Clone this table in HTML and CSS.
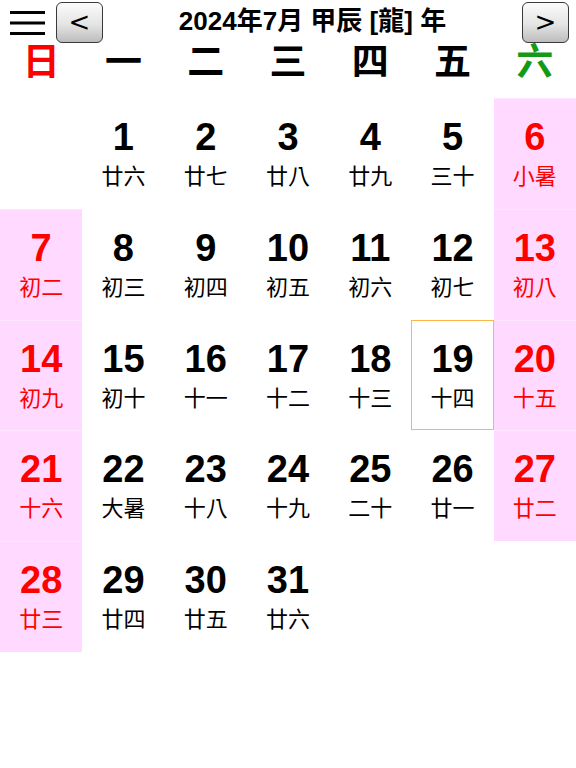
FILE: index.html
```html
<!DOCTYPE html>
<html lang="zh-Hant">
<head>
<meta charset="utf-8">
<title>2024年7月</title>
<link rel="stylesheet" href="styles.css">
</head>
<body>
<div class="page">
  <header class="topbar">
    <div class="menu">
      <svg width="36" height="26" viewBox="0 0 36 26">
        <rect x="0" y="1" width="35" height="3" fill="#000"/>
        <rect x="0" y="11.5" width="35" height="3" fill="#000"/>
        <rect x="0" y="22" width="35" height="3" fill="#000"/>
      </svg>
    </div>
    <button class="navbtn prev">&lt;</button>
    <div class="title">2024年7月 甲辰 [龍] 年</div>
    <button class="navbtn next">&gt;</button>
  </header>
  <div class="weekdays">
    <div class="wd sun">日</div>
    <div class="wd">一</div>
    <div class="wd">二</div>
    <div class="wd">三</div>
    <div class="wd">四</div>
    <div class="wd">五</div>
    <div class="wd sat">六</div>
  </div>
  <div class="grid">
    <div class="cell"></div>
    <div class="cell"><div class="num">1</div><div class="lunar">廿六</div></div>
    <div class="cell"><div class="num">2</div><div class="lunar">廿七</div></div>
    <div class="cell"><div class="num">3</div><div class="lunar">廿八</div></div>
    <div class="cell"><div class="num">4</div><div class="lunar">廿九</div></div>
    <div class="cell"><div class="num">5</div><div class="lunar">三十</div></div>
    <div class="cell weekend"><div class="num">6</div><div class="lunar">小暑</div></div>

    <div class="cell weekend"><div class="num">7</div><div class="lunar">初二</div></div>
    <div class="cell"><div class="num">8</div><div class="lunar">初三</div></div>
    <div class="cell"><div class="num">9</div><div class="lunar">初四</div></div>
    <div class="cell"><div class="num">10</div><div class="lunar">初五</div></div>
    <div class="cell"><div class="num">11</div><div class="lunar">初六</div></div>
    <div class="cell"><div class="num">12</div><div class="lunar">初七</div></div>
    <div class="cell weekend"><div class="num">13</div><div class="lunar">初八</div></div>

    <div class="cell weekend"><div class="num">14</div><div class="lunar">初九</div></div>
    <div class="cell"><div class="num">15</div><div class="lunar">初十</div></div>
    <div class="cell"><div class="num">16</div><div class="lunar">十一</div></div>
    <div class="cell"><div class="num">17</div><div class="lunar">十二</div></div>
    <div class="cell"><div class="num">18</div><div class="lunar">十三</div></div>
    <div class="cell today"><div class="num">19</div><div class="lunar">十四</div></div>
    <div class="cell weekend"><div class="num">20</div><div class="lunar">十五</div></div>

    <div class="cell weekend"><div class="num">21</div><div class="lunar">十六</div></div>
    <div class="cell"><div class="num">22</div><div class="lunar">大暑</div></div>
    <div class="cell"><div class="num">23</div><div class="lunar">十八</div></div>
    <div class="cell"><div class="num">24</div><div class="lunar">十九</div></div>
    <div class="cell"><div class="num">25</div><div class="lunar">二十</div></div>
    <div class="cell"><div class="num">26</div><div class="lunar">廿一</div></div>
    <div class="cell weekend"><div class="num">27</div><div class="lunar">廿二</div></div>

    <div class="cell weekend"><div class="num">28</div><div class="lunar">廿三</div></div>
    <div class="cell"><div class="num">29</div><div class="lunar">廿四</div></div>
    <div class="cell"><div class="num">30</div><div class="lunar">廿五</div></div>
    <div class="cell"><div class="num">31</div><div class="lunar">廿六</div></div>
    <div class="cell"></div>
    <div class="cell"></div>
    <div class="cell"></div>
  </div>
</div>
</body>
</html>
```
FILE: styles.css
```css
* { box-sizing: border-box; }
html, body { margin: 0; padding: 0; background: #fff; }
body {
  font-family: "Liberation Sans", "Noto Sans CJK TC", sans-serif;
  color: #000;
}
.page { width: 576px; height: 768px; overflow: hidden; }

.topbar {
  height: 41px;
  display: flex;
  align-items: flex-start;
  position: relative;
  z-index: 2;
}
.menu { width: 56px; padding: 10px 0 0 10px; }
.menu svg { display: block; }

.navbtn {
  margin-top: 2px;
  width: 47px;
  height: 41px;
  border: 1px solid #3a3a3a;
  border-radius: 6px;
  background: linear-gradient(#fbfbfb, #e4e4e4 55%, #bdbdbd);
  font-family: "DejaVu Sans", sans-serif;
  font-size: 26px;
  line-height: 36px;
  padding: 0 0 2px 0;
  color: #000;
  flex: none;
}
.navbtn.next { margin-right: 7px; }

.title {
  flex: 1;
  text-align: center;
  font-family: "Liberation Sans", "Noto Sans CJK TC", sans-serif;
  font-weight: bold;
  font-size: 26px;
  line-height: 26px;
  padding-top: 8px;
}

.weekdays {
  height: 57px;
  display: grid;
  grid-template-columns: repeat(7, 1fr);
}
.wd {
  text-align: center;
  font-family: "Noto Sans CJK TC", sans-serif;
  font-weight: bold;
  font-size: 37px;
  line-height: 37px;
}
.wd.sun { color: #ff0000; }
.wd.sat { color: #169a16; }

.grid {
  display: grid;
  grid-template-columns: repeat(7, 1fr);
  grid-template-rows: repeat(5, 110.8px);
}
.cell {
  text-align: center;
  padding-top: 20px;
}
.cell.weekend {
  background: #ffd9ff;
  color: #ff0000;
  border-top: 1px solid #ffe6ff;
  padding-top: 19px;
}
.cell.today {
  border: 1px solid #fbb848;
  padding-top: 19px;
}
.num {
  font-family: "Liberation Sans", sans-serif;
  font-weight: bold;
  font-size: 38px;
  line-height: 38px;
}
.lunar {
  margin-top: 7px;
  font-family: "Noto Sans CJK TC", sans-serif;
  font-size: 22px;
  line-height: 22px;
}
```
